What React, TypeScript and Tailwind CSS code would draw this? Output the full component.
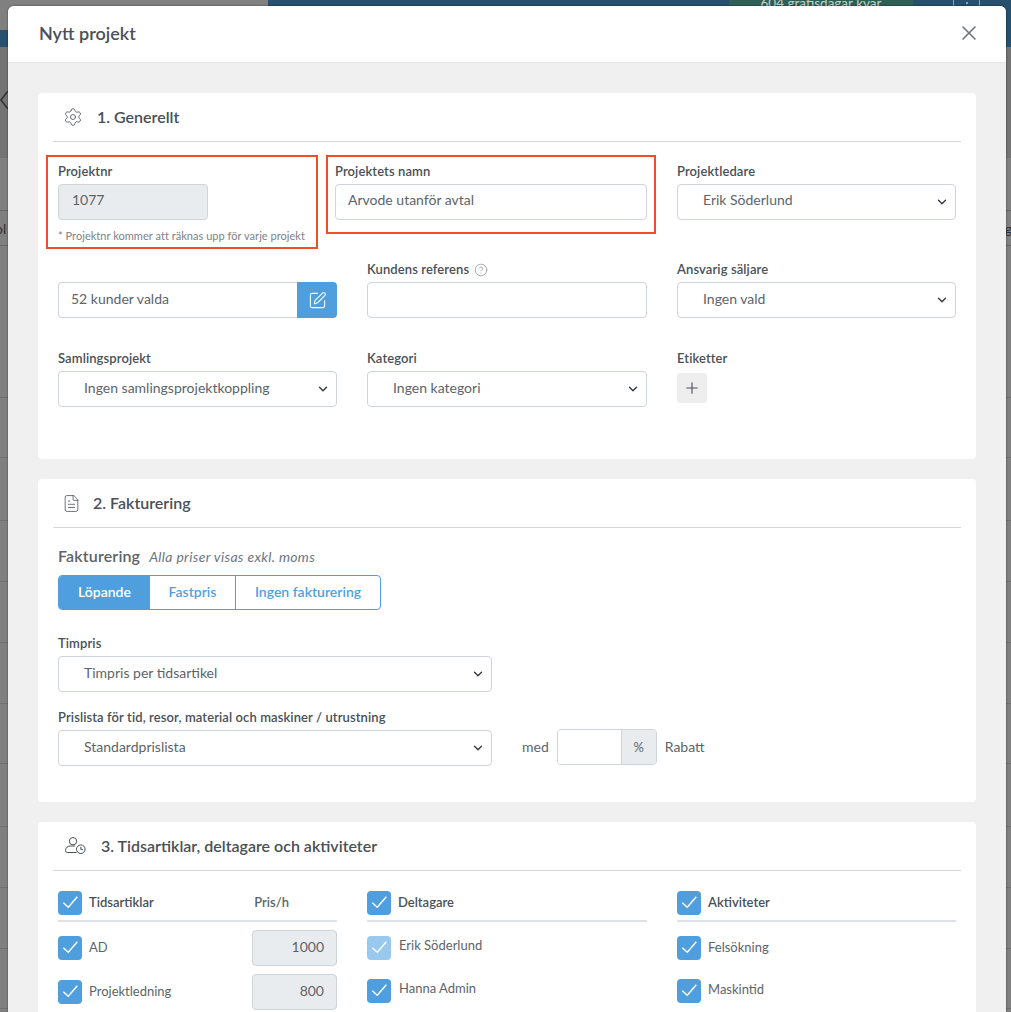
import type { ReactNode } from "react";
import { ChevronDown, CircleHelp, FileText, Plus, Settings, SquarePen, X } from "lucide-react";

const rowLines = [60, 63, 61, 61, 61, 60, 63, 61, 61, 60];

const inputBase = "h-9 rounded-[4px] border border-[#ced4da] text-sm text-[#5c646b] flex items-center pb-[3px]";

const Label = (props: { children: ReactNode }) => (
	<div className="h-5 mb-[2px] flex items-center text-[13px] font-semibold tracking-[0.1px] text-[#495057]">{props.children}</div>
);

const TextBox = (props: { value?: string; className?: string }) => (
	<div className={`${inputBase} px-[12px] bg-white ${props.className ?? ""}`}>{props.value}</div>
);

const Select = (props: { value: string; className?: string }) => (
	<div className={`${inputBase} pl-[25px] pr-[6px] justify-between bg-white ${props.className ?? ""}`}>
		<span>{props.value}</span>
		<ChevronDown size={14} strokeWidth={2.4} className="text-[#343a40] mt-[3px]" />
	</div>
);

const Card = (props: { icon: ReactNode; title: string; className: string; children: ReactNode }) => (
	<section className={`rounded-[4px] bg-white px-[15px] ${props.className}`}>
		<div className="h-[49px] flex items-center border-b border-[#d5d8db] text-[#495057]">
			{props.icon}
			<h2 className="text-[16px] font-semibold">{props.title}</h2>
		</div>
		{props.children}
	</section>
);

const Check = (props: { light?: boolean }) => (
	<span className={`w-6 h-6 shrink-0 rounded-[4px] flex items-center justify-center ${props.light ? "bg-[#99c9ef]" : "bg-[#4f9fde]"}`}>
		<svg width="24" height="24" viewBox="0 0 24 24" fill="none" stroke="white" strokeWidth="1.4">
			<path d="M5.3 11.7 10.3 16.3 19.3 5.7" />
		</svg>
	</span>
);

const CheckRow = (props: { label: string; light?: boolean; className?: string; labelClass?: string }) => (
	<div className={`flex items-start ${props.className ?? ""}`}>
		<Check light={props.light} />
		<span className={`text-[13px] leading-[18px] text-[#5c646b] ${props.labelClass ?? ""}`}>{props.label}</span>
	</div>
);

const ColumnHead = (props: { label: string; right?: string }) => (
	<div className="h-[31px] flex items-start gap-[7px] border-b-2 border-[#dee2e6]">
		<Check />
		<span className="h-6 flex items-center text-[13px] font-semibold text-[#495057]">{props.label}</span>
		{props.right && <span className="h-6 ml-auto mr-[48px] flex items-center text-[13px] font-semibold text-[#5c646b]">{props.right}</span>}
	</div>
);

const ArticleRow = (props: { label: string; price: string }) => (
	<div className="h-9 flex items-center justify-between">
		<div className="flex items-center gap-[7px]">
			<Check />
			<span className="text-[13px] text-[#5c646b]">{props.label}</span>
		</div>
		<div className={`${inputBase} w-[85px] justify-end px-[12px] bg-[#e9ecef]`}>{props.price}</div>
	</div>
);

const PeopleClockIcon = () => (
	<svg width="21" height="18" viewBox="0 0 21 18" fill="none" stroke="currentColor" strokeWidth="1" className="mr-[15px] ml-3">
		<circle cx="8" cy="4.2" r="3.7" />
		<path d="M11.5 15.5H2.5a2 2 0 0 1-2-2c0-2.8 2.4-4.5 5-4.5h4.5" />
		<circle cx="15.8" cy="12.2" r="4.3" />
		<path d="M15.8 9.8v2.6h2.2" />
	</svg>
);

export default function App() {
	return (
		<div className="relative h-[1012px] w-[1011px] overflow-hidden bg-[#808080] font-[Lato,sans-serif]">
			{/* page behind the dialog */}
			<div className="flex h-[47px]">
				<div className="w-[268px] flex flex-col">
					<div className="h-[30px] bg-[#808080]" />
					<div className="h-[17px] bg-[#27506f]" />
				</div>
				<div className="flex-1 bg-[#27506f] flex items-start pl-[461px]">
					<div className="w-[184px] h-[30px] bg-[#2f5e55] text-center text-[13.5px] leading-none pt-[2px] -mt-[5px] text-[#c3cfc9]">604 gratisdagar kvar</div>
					<div className="ml-10 w-[27px] h-[8px] rounded-b-[4px] border-x border-[#8fa5b5] flex justify-center">
						<span className="mt-[2px] w-[2px] h-[2px] bg-[#8fa5b5]" />
					</div>
				</div>
			</div>
			<div className="h-[111px] bg-[#747474] flex items-start pt-[44px]">
				<svg width="8" height="18" viewBox="0 0 8 18" fill="none" stroke="#333" strokeWidth="1.6">
					<path d="M8 0 1 9l7 9" />
				</svg>
			</div>
			<div className="h-[52px]" />
			<div className="h-9 border-y border-[#696969] text-[14px] text-[#333] flex items-center justify-between">
				<span className="-ml-[5px]">ol</span>
				<span className="-mr-[1px]">g</span>
			</div>
			<div className="h-[152px] border-b border-[#6f6f6f]" />
			{rowLines.map((h, i) => (
				<div key={i} className="border-b border-[#707070]" style={{ height: h }} />
			))}

			{/* dialog */}
			<div className="absolute left-2 top-[6px] w-[998px] h-[1100px] rounded-t-[6px] bg-[#f0f0f0] shadow-[0_0_2px_rgba(0,0,0,0.6)]">
				<header className="h-[57px] pb-[2px] rounded-t-[6px] bg-white border-b border-[#e9e9e9] flex items-center justify-between pl-[31px] pr-[25px]">
					<h1 className="text-[18px] font-semibold text-[#495057]">Nytt projekt</h1>
					<X size={24} strokeWidth={1.6} className="text-[#6c757d]" />
				</header>

				<div className="flex flex-col gap-5 px-[30px] pt-[30px]">
					<Card
						icon={<Settings size={20} strokeWidth={1} className="ml-[10px] mr-[14px]" />}
						title="1. Generellt"
						className="h-[366px]"
					>
						<div className="flex items-start pt-[13px] -ml-[7px]">
							<div className="w-[272px] h-[94px] border-2 border-[#f04e23] pl-[10px] pt-[5px]">
								<Label>Projektnr</Label>
								<div className={`${inputBase} w-[150px] px-[13px] bg-[#e9ecef] pb-[4px]!`}>1077</div>
								<p className="mt-[9px] text-[11px] leading-[14px] tracking-[0.04px] text-[#7b8288]">* Projektnr kommer att räknas upp för varje projekt</p>
							</div>
							<div className="ml-2 w-[330px] h-[79px] border-2 border-[#f04e23] pl-[7px] pr-[7px] pt-[5px]">
								<Label>Projektets namn</Label>
								<TextBox value="Arvode utanför avtal" className="pb-[4px]!" />
							</div>
							<div className="ml-[21px] w-[279px] pt-[7px]">
								<Label>Projektledare</Label>
								<Select value="Erik Söderlund" className="pb-[4px]!" />
							</div>
						</div>

						<div className="grid grid-cols-[279px_280px_279px] gap-x-[30px] gap-y-[31px] mt-[11px] px-[5px] items-end">
							<div className="flex">
								<TextBox value="52 kunder valda" className="flex-1 rounded-r-none border-r-0" />
								<div className="w-10 h-9 rounded-r-[4px] bg-[#4f9fde] flex items-center justify-center">
									<SquarePen size={19} strokeWidth={1.3} className="text-white" />
								</div>
							</div>
							<div>
								<Label>
									Kundens referens
									<CircleHelp size={14} strokeWidth={1.2} className="ml-[5px] text-[#868e96]" />
								</Label>
								<TextBox />
							</div>
							<div>
								<Label>Ansvarig säljare</Label>
								<Select value="Ingen vald" />
							</div>
							<div>
								<Label>Samlingsprojekt</Label>
								<Select value="Ingen samlingsprojektkoppling" />
							</div>
							<div>
								<Label>Kategori</Label>
								<Select value="Ingen kategori" />
							</div>
							<div className="self-start">
								<Label>Etiketter</Label>
								<div className="mt-[4px] w-[30px] h-[30px] rounded-[3px] bg-[#eeeeee] flex items-center justify-center">
									<Plus size={18} strokeWidth={1.5} className="text-[#495057]" />
								</div>
							</div>
						</div>
					</Card>

					<Card
						icon={<FileText size={19} strokeWidth={1} className="ml-[9px] mr-[12px]" />}
						title="2. Fakturering"
						className="h-[323px]"
					>
						<div className="px-[5px]">
							<div className="mt-[17px] h-[22px] flex items-center gap-[9px]">
								<span className="text-[16px] font-semibold tracking-[0.15px] text-[#5c646b]">Fakturering</span>
								<span className="text-[14px] italic tracking-[0.33px] text-[#6c757d]">Alla priser visas exkl. moms</span>
							</div>
							<div className="mt-[8px] h-[35px] w-[323px] flex rounded-[4px] border border-[#4f9fde] text-[14px] font-semibold text-[#4f9fde] overflow-hidden">
								<div className="w-[91px] bg-[#4f9fde] text-white flex items-center justify-center pb-[2px]">Löpande</div>
								<div className="w-[86px] border-r border-[#4f9fde] flex items-center justify-center pb-[2px]">Fastpris</div>
								<div className="flex-1 flex items-center justify-center pb-[2px]">Ingen fakturering</div>
							</div>
							<div className="mt-[24px]">
								<Label>Timpris</Label>
								<Select value="Timpris per tidsartikel" className="w-[434px]" />
							</div>
							<div className="mt-[16px]">
								<Label>Prislista för tid, resor, material och maskiner / utrustning</Label>
								<div className="flex items-center text-sm text-[#5c646b]">
									<Select value="Standardprislista" className="w-[434px]" />
									<span className="ml-[30px] mr-2 pb-[3px]">med</span>
									<div className="flex h-9 w-[100px] rounded-[4px] border border-[#ced4da] -mt-[2px] overflow-hidden">
										<div className="w-[64px] border-r border-[#ced4da] bg-white" />
										<div className="flex-1 bg-[#e9ecef] flex items-center justify-center text-[13px]">%</div>
									</div>
									<span className="ml-2 pb-[3px]">Rabatt</span>
								</div>
							</div>
						</div>
					</Card>

					<Card icon={<PeopleClockIcon />} title="3. Tidsartiklar, deltagare och aktiviteter" className="h-[300px]">
						<div className="grid grid-cols-[279px_280px_279px] gap-x-[30px] pt-5 px-[5px]">
							<div>
								<ColumnHead label="Tidsartiklar" right="Pris/h" />
								<div className="mt-[8px] flex flex-col gap-2">
									<ArticleRow label="AD" price="1000" />
									<ArticleRow label="Projektledning" price="800" />
								</div>
							</div>
							<div>
								<ColumnHead label="Deltagare" />
								<CheckRow label="Erik Söderlund" light className="mt-[14px]" labelClass="ml-2" />
								<CheckRow label="Hanna Admin" className="mt-[19px]" labelClass="ml-2" />
							</div>
							<div>
								<ColumnHead label="Aktiviteter" />
								<CheckRow label="Felsökning" className="mt-[14px]" labelClass="ml-[7px] pt-[2px]" />
								<CheckRow label="Maskintid" className="mt-[19px]" labelClass="ml-[7px] pt-[1px]" />
							</div>
						</div>
					</Card>
				</div>
			</div>
		</div>
	);
}
